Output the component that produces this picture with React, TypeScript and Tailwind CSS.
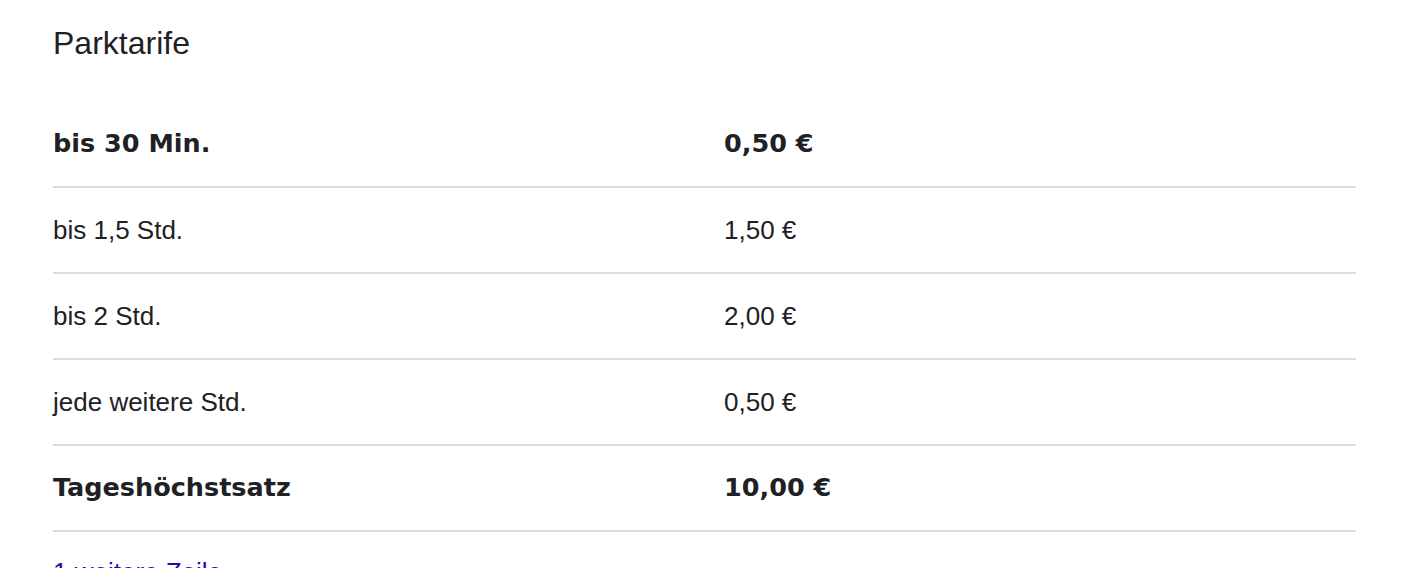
import React from "react";

const rows: { label: string; value: string; bold?: boolean }[] = [
  { label: "bis 30 Min.", value: "0,50 €", bold: true },
  { label: "bis 1,5 Std.", value: "1,50 €" },
  { label: "bis 2 Std.", value: "2,00 €" },
  { label: "jede weitere Std.", value: "0,50 €" },
  { label: "Tageshöchstsatz", value: "10,00 €", bold: true },
];

export default function App() {
  return (
    <div className="w-[1427px] h-[568px] overflow-hidden bg-white text-[#202124] font-['Liberation_Sans',Arial,sans-serif]">
      <div className="pl-[53px] pr-[71px] pt-[23px]">
        <div className="h-[40px] leading-[40px] text-[32px] mb-[39px]">Parktarife</div>
        <div>
          {rows.map((r) => (
            <div
              key={r.label}
              className="grid grid-cols-[671px_1fr] items-center h-[86px] border-b-2 border-[#dadce0]"
            >
              {r.bold ? (
                <>
                  <div className="font-['DejaVu_Sans',sans-serif] font-bold text-[25.5px] leading-[32px] -mt-[2px]">{r.label}</div>
                  <div className="font-['DejaVu_Sans',sans-serif] font-bold text-[25.5px] leading-[32px] -mt-[2px]">{r.value}</div>
                </>
              ) : (
                <>
                  <div className="text-[26px] leading-[32px]">{r.label}</div>
                  <div className="text-[26px] leading-[32px]">{r.value}</div>
                </>
              )}
            </div>
          ))}
        </div>
        <div className="mt-[24px] text-[26px] leading-[32px] text-[#1a0dab]">1 weitere Zeile</div>
      </div>
    </div>
  );
}
